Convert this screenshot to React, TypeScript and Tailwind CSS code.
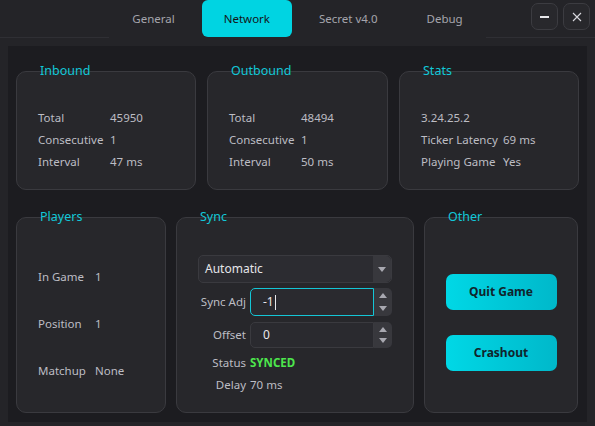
import { ReactNode } from "react";

const font = { fontFamily: '"Noto Sans", "Open Sans", sans-serif' };

function Card({ title, className, children }: { title: string; className?: string; children: ReactNode }) {
    return (
        <div className={`relative rounded-[10px] border border-[#3a3a3f] bg-[#27272b] ${className ?? ""}`}>
            <span className="absolute -top-[10px] left-[23px] text-[12.5px] leading-[18px] text-[#12c8d8]">{title}</span>
            {children}
        </div>
    );
}

function Row({ label, value, w }: { label: string; value: string; w: string }) {
    return (
        <div className="flex h-[22px] items-center whitespace-nowrap">
            <span className={w}>{label}</span>
            <span>{value}</span>
        </div>
    );
}

function Triangle({ up }: { up?: boolean }) {
    return (
        <svg width="8" height="5" viewBox="0 0 8 5">
            <path d={up ? "M0 5 L4 0 L8 5 Z" : "M0 0 L8 0 L4 5 Z"} fill="#a8a8b0" />
        </svg>
    );
}

function SpinBox({ value, focused, h }: { value: string; focused?: boolean; h: string }) {
    return (
        <div className={`flex w-[142px] ${h}`}>
            <div
                className={`flex flex-1 items-center rounded-l-[5px] bg-[#2a2a2f] pl-[12px] text-[12px] text-[#e8e8ec] ${
                    focused ? "border border-[#14c6d6]" : "border border-[#3a3a3f]"
                }`}
            >
                {value}
                {focused && <span className="ml-[1px] inline-block h-[15px] w-px bg-[#e8e8ec]" />}
            </div>
            <div className="flex w-[18px] flex-col items-center justify-between rounded-r-[5px] bg-[#38383d] py-[5px]">
                <Triangle up />
                <Triangle />
            </div>
        </div>
    );
}

export default function App() {
    return (
        <div className="flex h-[426px] w-[595px] flex-col overflow-hidden bg-[#242428] text-[11.5px] text-[#bdbdc4]" style={font}>
            {/* Header */}
            <header className="grid h-[38px] grid-cols-[1fr_auto_1fr] border-b border-[#2f2f34]">
                <div />
                <nav className="-mb-px flex items-stretch gap-[5px] bg-[#242428] px-[1px]">
                    {["General", "Network", "Secret v4.0", "Debug"].map((t) =>
                        t === "Network" ? (
                            <div key={t} className="flex h-[37px] items-center rounded-[6px] bg-[#00d4e2] px-[22px] text-[11.5px] text-[#141418]">
                                {t}
                            </div>
                        ) : (
                            <div key={t} className="flex h-[37px] items-center px-[22px] text-[11.5px] text-[#a4a4ac]">
                                {t}
                            </div>
                        )
                    )}
                </nav>
                <div className="flex justify-end gap-[5px] pr-[5px] pt-[3px]">
                    <button className="flex h-[27px] w-[27px] items-center justify-center rounded-[7px] border border-[#3c3c41] bg-[#28282c]">
                        <span className="h-[2px] w-[9px] bg-[#e6e6ea]" />
                    </button>
                    <button className="flex h-[27px] w-[27px] items-center justify-center rounded-[7px] border border-[#3c3c41] bg-[#28282c]">
                        <svg width="10" height="10" viewBox="0 0 10 10">
                            <path d="M1 1 L9 9 M9 1 L1 9" stroke="#d8d8de" strokeWidth="1.1" />
                        </svg>
                    </button>
                </div>
            </header>

            {/* Body */}
            <main className="mx-[8px] mt-[8px] mb-[4px] flex flex-1 flex-col bg-[#1c1c20] px-[8px] pt-[25px] pb-[9px]">
                <div className="grid h-[119px] grid-cols-[180px_181px_180px] gap-[11px]">
                    <Card title="Inbound">
                        <div className="px-[21px] pt-[35px]">
                            <Row label="Total" value="45950" w="w-[72px]" />
                            <Row label="Consecutive" value="1" w="w-[72px]" />
                            <Row label="Interval" value="47 ms" w="w-[72px]" />
                        </div>
                    </Card>
                    <Card title="Outbound">
                        <div className="px-[21px] pt-[35px]">
                            <Row label="Total" value="48494" w="w-[72px]" />
                            <Row label="Consecutive" value="1" w="w-[72px]" />
                            <Row label="Interval" value="50 ms" w="w-[72px]" />
                        </div>
                    </Card>
                    <Card title="Stats">
                        <div className="px-[21px] pt-[35px]">
                            <Row label="3.24.25.2" value="" w="" />
                            <Row label="Ticker Latency" value="69 ms" w="w-[82px]" />
                            <Row label="Playing Game" value="Yes" w="w-[82px]" />
                        </div>
                    </Card>
                </div>

                <div className="mt-[27px] grid flex-1 grid-cols-[150px_238px_154px] gap-[10px]">
                    <Card title="Players">
                        <div className="flex flex-col gap-[25px] px-[21px] pt-[48px]">
                            <Row label="In Game" value="1" w="w-[57px]" />
                            <Row label="Position" value="1" w="w-[57px]" />
                            <Row label="Matchup" value="None" w="w-[57px]" />
                        </div>
                    </Card>

                    <Card title="Sync">
                        <div className="flex flex-col px-[21px] pt-[37px] whitespace-nowrap">
                            <div className="flex h-[28px] rounded-[5px] border border-[#3a3a3f] bg-[#2c2c31]">
                                <div className="flex flex-1 items-center pl-[6px] text-[12px] text-[#e6e6ea]">Automatic</div>
                                <div className="flex w-[18px] items-center justify-center rounded-r-[5px] bg-[#38383d]">
                                    <Triangle />
                                </div>
                            </div>
                            <div className="mt-[5px] flex items-center gap-[4px]">
                                <span className="w-[48px] text-right">Sync Adj</span>
                                <SpinBox value="-1" focused h="h-[28px]" />
                            </div>
                            <div className="mt-[6px] flex items-center gap-[4px]">
                                <span className="w-[48px] text-right">Offset</span>
                                <SpinBox value="0" h="h-[26px]" />
                            </div>
                            <div className="mt-[4px] flex h-[22px] items-center gap-[4px]">
                                <span className="w-[48px] text-right">Status</span>
                                <span className="font-bold text-[#4de64d]">SYNCED</span>
                            </div>
                            <div className="flex h-[22px] items-center gap-[4px]">
                                <span className="w-[48px] text-right">Delay</span>
                                <span>70 ms</span>
                            </div>
                        </div>
                    </Card>

                    <Card title="Other">
                        <div className="flex flex-col items-center gap-[25px] pt-[56px]">
                            {["Quit Game", "Crashout"].map((b) => (
                                <button
                                    key={b}
                                    className="h-[36px] w-[111px] rounded-[7px] bg-gradient-to-r from-[#00d8e6] to-[#00b8ca] text-[12px] font-bold text-[#10242c]"
                                >
                                    {b}
                                </button>
                            ))}
                        </div>
                    </Card>
                </div>
            </main>
        </div>
    );
}
